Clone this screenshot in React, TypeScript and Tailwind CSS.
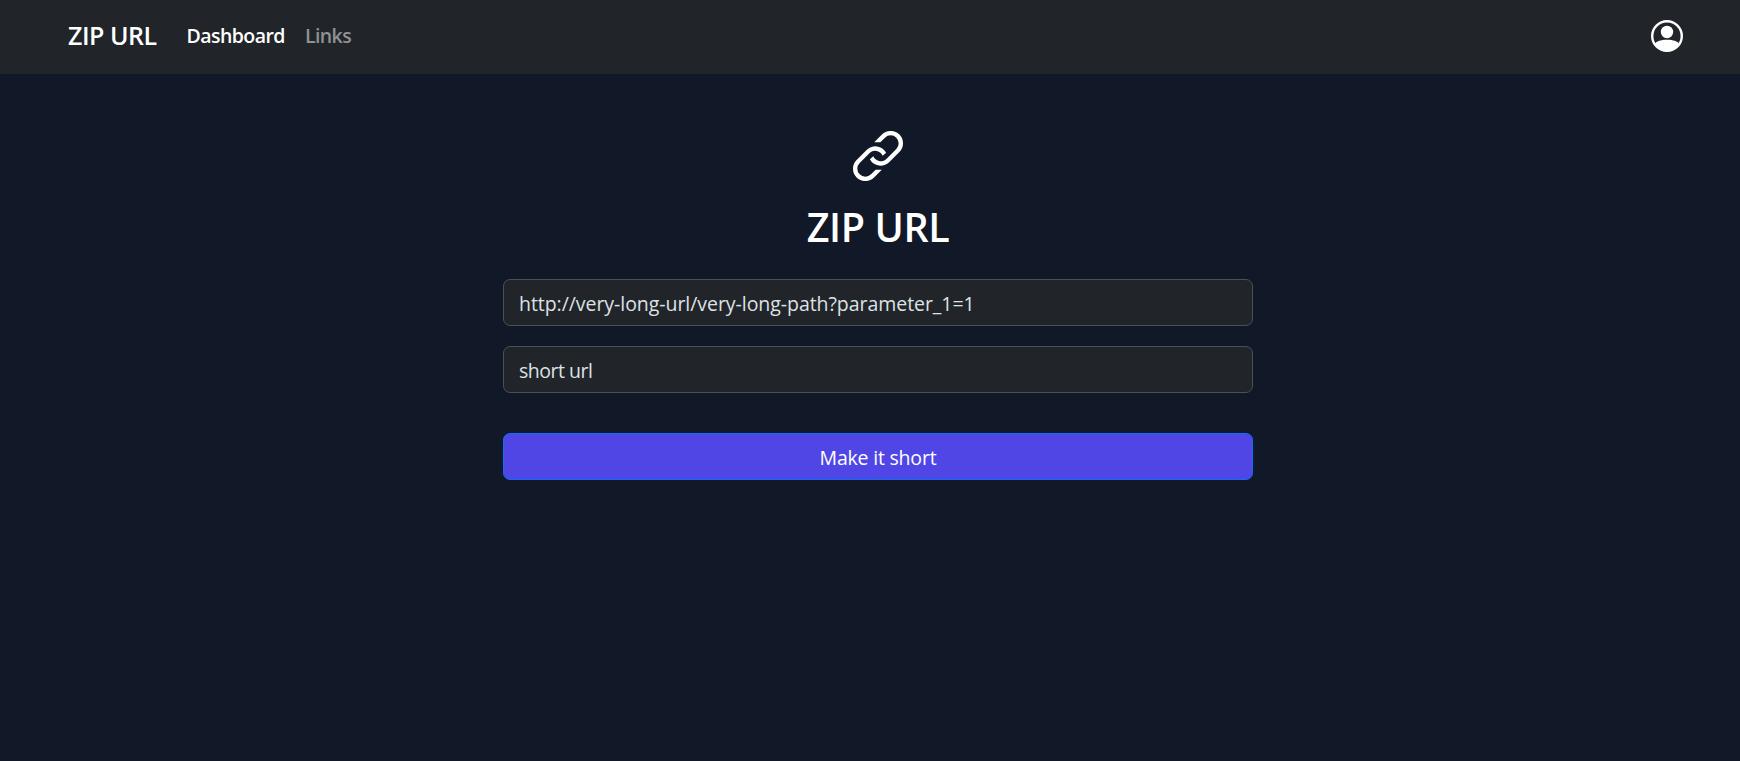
const LINK_HALF =
  "M63.6 34 86.8 10.8A37 37 0 0 1 139.2 63.2L109.2 93.2A37 37 0 0 1 50.5 84.5L61 75.5A24 24 0 0 0 100 84L130 54A24 24 0 0 0 96 20L82 34Z";

function LinkIcon() {
  return (
    <svg viewBox="0 0 150 150" className="size-[50px]" fill="white" aria-hidden="true">
      <path d={LINK_HALF} />
      <path d={LINK_HALF} transform="rotate(180 75 75)" />
    </svg>
  );
}

function AvatarIcon() {
  return (
    <svg viewBox="0 0 16 16" className="size-8" fill="white" aria-hidden="true">
      <circle cx="8" cy="6" r="3.1" />
      <circle cx="8" cy="8" r="7.4" fill="none" stroke="white" strokeWidth="1.2" />
      <path d="M1.8 11.9C2.9 10.7 4.7 9.9 8 9.9s5.1.8 6.2 2A7.2 7.2 0 0 1 8 15.3a7.2 7.2 0 0 1-6.2-3.4Z" />
    </svg>
  );
}

const inputClass =
  "h-[47px] w-full rounded-[7px] border border-[#495057] bg-[#212529] px-[15px] pt-[2px] text-[19.5px] text-[#dee2e6] outline-none placeholder:text-[#dee2e6]";

export default function App() {
  return (
    <div className="min-h-screen bg-[#111827] font-['Open_Sans','Noto_Sans',sans-serif] text-white">
      <nav className="flex h-[74px] items-center bg-[#212529] pr-[57px] pb-[2px] pl-[68px] leading-[30px]">
        <a href="#" className="w-[118.5px] pb-[2px] text-[25px] font-semibold tracking-[-0.5px] whitespace-nowrap">
          ZIP URL
        </a>
        <a href="#" className="w-[118.5px] text-[19.5px] font-semibold tracking-[-0.55px]">
          Dashboard
        </a>
        <a href="#" className="text-[19.5px] font-semibold tracking-[-0.6px] text-[#909294]">
          Links
        </a>
        <button className="ml-auto" aria-label="Account">
          <AvatarIcon />
        </button>
      </nav>
      <main className="mx-auto flex w-[750px] translate-x-2 flex-col items-center pt-[57px]">
        <LinkIcon />
        <h1 className="mt-[22px] text-[39.5px] leading-[48px] font-semibold tracking-[-0.4px]">ZIP URL</h1>
        <form className="mt-[28px] flex w-full flex-col" onSubmit={(e) => e.preventDefault()}>
          <input className={`${inputClass} tracking-[-0.05px]`} aria-label="Long URL" placeholder="http://very-long-url/very-long-path?parameter_1=1" />
          <input className={`${inputClass} mt-5 tracking-[-0.5px]`} aria-label="Short URL" placeholder="short url" />
          <button className="mt-10 h-[47px] rounded-[7px] border border-[#0d6efd] bg-[#4f46e5] pt-[2px] text-[19.5px] tracking-[-0.2px]">
            Make it short
          </button>
        </form>
      </main>
    </div>
  );
}
